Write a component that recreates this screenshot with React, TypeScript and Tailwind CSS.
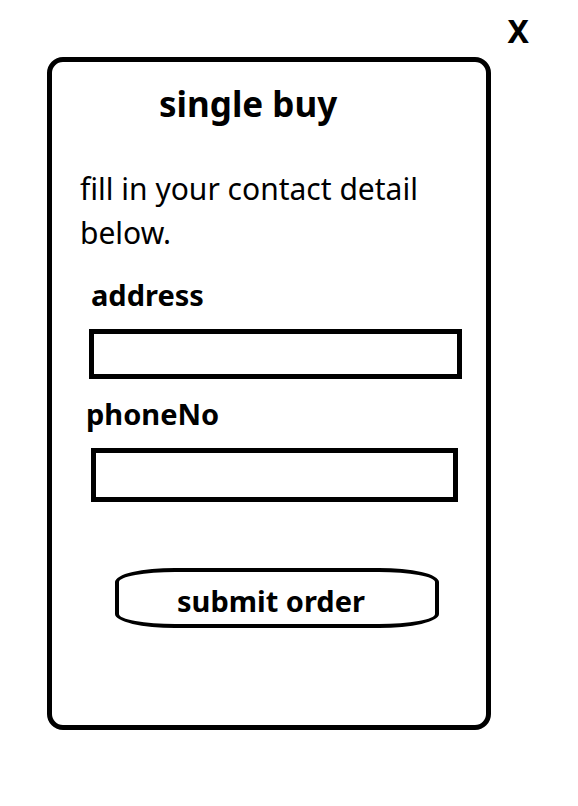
import React from "react";

export default function App() {
  return (
    <div
      className="relative w-[578px] h-[806px] bg-white text-black"
      style={{ fontFamily: '"Noto Sans", "Open Sans", sans-serif' }}
    >
      <div className="flex justify-end pr-[49px] pt-[12px] h-[57px]">
        <span className="text-[32px] font-bold leading-[38px]">X</span>
      </div>
      <div className="ml-[47px] w-[444px] h-[673px] border-[5px] border-black rounded-[16px] flex flex-col">
        <h1 className="pl-[107px] pt-[19px] text-[35px] font-bold leading-[46px]">single buy</h1>
        <p className="pl-[28px] pr-[40px] mt-[40px] text-[30px] leading-[44px]">
          fill in your contact detail below.
        </p>
        <label className="pl-[39px] mt-[20px] text-[29px] font-bold leading-[40px]">address</label>
        <div className="ml-[37px] mt-[14px] w-[373px] h-[50px] border-[5px] border-black"></div>
        <label className="pl-[34px] mt-[15px] text-[29px] font-bold leading-[40px]">phoneNo</label>
        <div className="ml-[39px] mt-[14px] w-[367px] h-[54px] border-[5px] border-black"></div>
        <div className="flex ml-[63px] mt-[66px]">
          <button className="w-[324px] h-[60px] border-[4px] border-black rounded-[60px/14px] pr-[12px] pt-[5px] text-[29px] font-bold leading-none flex items-center justify-center">
            submit order
          </button>
        </div>
      </div>
    </div>
  );
}
